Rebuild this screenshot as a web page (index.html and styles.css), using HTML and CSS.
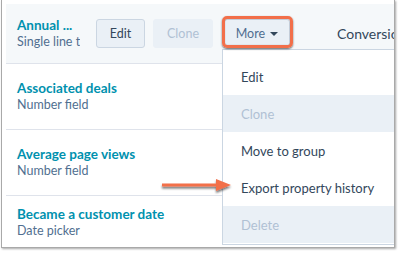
FILE: index.html
```html
<!DOCTYPE html>
<html>
<head>
<meta charset="utf-8">
<link rel="stylesheet" href="styles.css">
</head>
<body>
<div class="frame">
  <div class="table">
    <div class="row head">
      <div class="cell name">
        <div class="title">Annual ...</div>
        <div class="sub clip">Single line text</div>
      </div>
      <div class="actions">
        <button class="btn">Edit</button>
        <button class="btn disabled">Clone</button>
        <button class="btn more">More <span class="caret"></span></button>
      </div>
      <div class="colhead">Conversion</div>
    </div>
    <div class="row">
      <div class="cell name">
        <div class="title">Associated deals</div>
        <div class="sub">Number field</div>
      </div>
    </div>
    <div class="row">
      <div class="cell name">
        <div class="title">Average page views</div>
        <div class="sub">Number field</div>
      </div>
    </div>
    <div class="row last">
      <div class="cell name">
        <div class="title">Became a customer date</div>
        <div class="sub">Date picker</div>
      </div>
    </div>
  </div>
  <div class="menu">
    <div class="item">Edit</div>
    <div class="item off">Clone</div>
    <div class="item">Move to group</div>
    <div class="item">Export property history</div>
    <div class="item off">Delete</div>
  </div>
  <div class="hl"></div>
  <svg class="arrow" width="80" height="20" viewBox="0 0 80 20">
    <defs>
      <filter id="sh" x="-10%" y="-50%" width="120%" height="200%">
        <feDropShadow dx="0" dy="2" stdDeviation="1" flood-color="#000" flood-opacity="0.55"/>
      </filter>
    </defs>
    <g filter="url(#sh)">
      <rect x="3" y="7.5" width="58" height="3" fill="#f26f4a"/>
      <polygon points="57,3 72,9 57,15" fill="#f26f4a"/>
    </g>
  </svg>
</div>
</body>
</html>
```
FILE: styles.css
```css
* { box-sizing: border-box; }
html, body { margin: 0; padding: 0; background: #fff; }
body { font-family: Lato, "Open Sans", sans-serif; width: 399px; height: 255px; overflow: hidden; }
.frame {
  position: relative;
  margin-left: 1px;
  width: 394px;
  height: 248px;
  border: 1px solid #a9a9a9;
  border-top: none;
  box-shadow: 1px 1px 2px rgba(0,0,0,0.35);
  padding: 4px 0 0 4px;
  background: #fff;
  overflow: hidden;
}
.table { width: 388px; }
.row {
  display: flex;
  align-items: center;
  height: 66px;
  border-bottom: 1px solid #dfe3eb;
  padding-left: 11px;
  overflow: hidden;
}
.row.head { background: #f5f8fa; height: 60px; }
.row.last { border-bottom: none; height: 52px; }
.name { width: 79px; flex-shrink: 0; }
.title { color: #0091ae; font-weight: 700; font-size: 13.5px; line-height: 17px; white-space: nowrap; }
.sub { color: #516f90; font-size: 12.5px; line-height: 16px; white-space: nowrap; }
.clip { width: 63px; overflow: hidden; }
.actions { display: flex; gap: 8px; flex-shrink: 0; }
.btn {
  font-family: inherit;
  font-size: 12.5px;
  height: 29px;
  border-radius: 3px;
  background: #eaf0f6;
  border: 1px solid #cbd6e2;
  color: #33475b;
  padding: 0;
  width: 49px;
}
.btn.disabled { border-color: #eaf0f6; color: #b0c1d4; width: 60px; }
.btn.more { width: 66px; margin-left: 3px; color: #506e91; }
.caret {
  display: inline-block;
  width: 0; height: 0;
  border-left: 4px solid transparent;
  border-right: 4px solid transparent;
  border-top: 4px solid #33475b;
  vertical-align: 2px;
  margin-left: 2px;
}
.colhead { margin-left: 47px; font-size: 14px; color: #33475b; white-space: nowrap; flex-shrink: 0; }
.menu {
  position: absolute;
  left: 220px;
  top: 49px;
  width: 172px;
  height: 196px;
  background: #fff;
  border: 1px solid #cbd6e2;
  border-right: none;
  padding-top: 8px;
}
.item {
  height: 37px;
  display: flex;
  align-items: center;
  padding-left: 18px;
  font-size: 13px;
  color: #33475b;
}
.item.off { background: #eaf0f6; color: #b0c1d4; }
.hl {
  position: absolute;
  left: 220px;
  top: 16px;
  width: 71px;
  height: 32px;
  border: 3px solid #f26f4a;
  border-radius: 5px;
  box-shadow: 0 1px 2px rgba(0,0,0,0.6), inset 0 0 1px rgba(0,0,0,0.4);
}
.arrow { position: absolute; left: 157px; top: 176px; }
```
